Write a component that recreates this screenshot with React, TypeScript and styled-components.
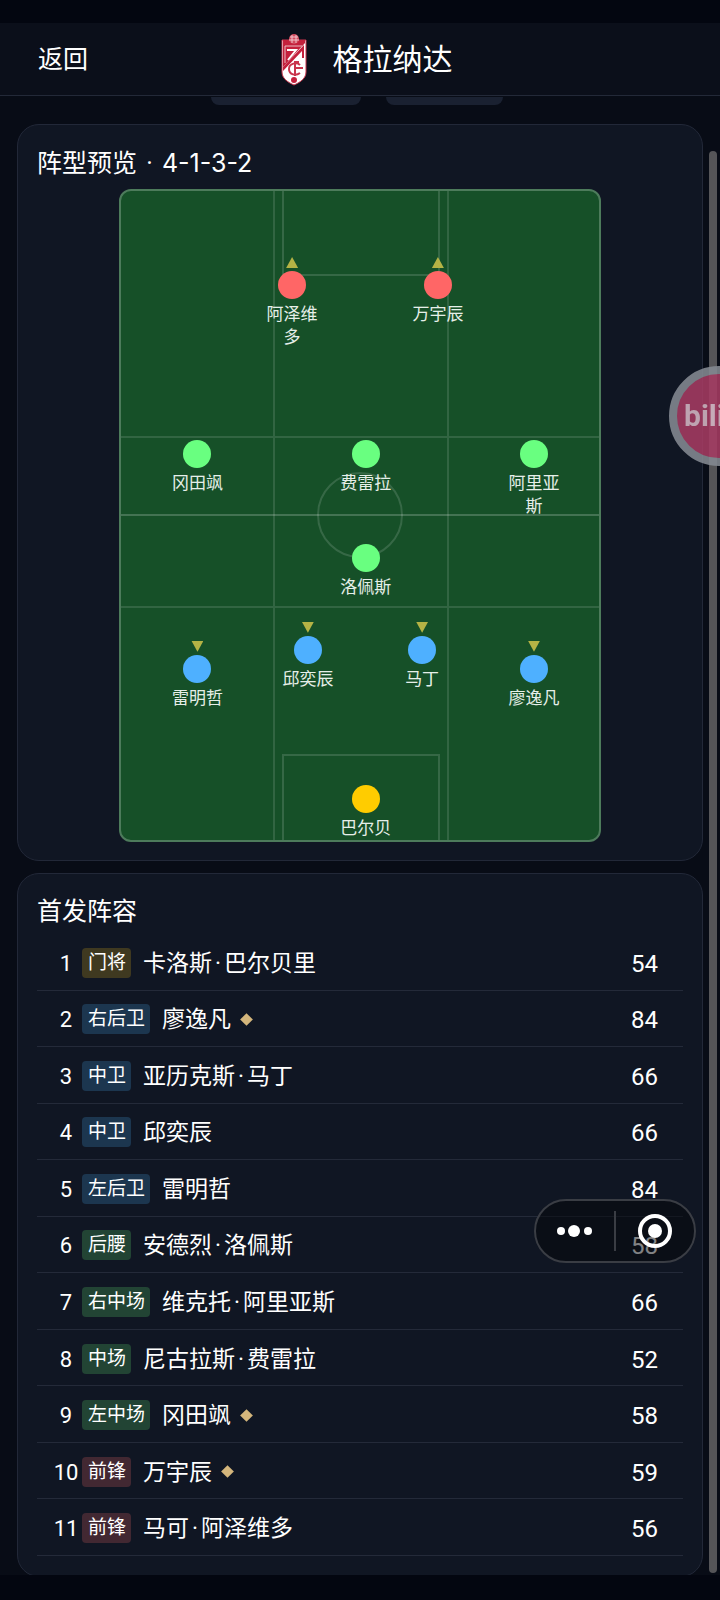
import React, { Component, Fragment } from 'react';
import styled, { createGlobalStyle } from 'styled-components';

type Line = 'gk' | 'def' | 'mid' | 'fwd';

type MarkerType = {
  name: string,
  line: Line,
  x: number,
  y: number,
  duty?: 'attack' | 'defend'
};

type StarterType = {
  position: string,
  line: Line,
  name: string,
  rating: number,
  special?: boolean
};

const dotColors: Record<Line, string> = {
  gk: '#ffcc00',
  def: '#4eb0ff',
  mid: '#69ff80',
  fwd: '#ff6666'
};

const tagColors: Record<Line, string> = {
  gk: '#3f3920',
  def: '#1c364f',
  mid: '#224434',
  fwd: '#422832'
};

// x and y are percentages of the pitch, measured to the centre of the dot
const markers: MarkerType[] = [
  { name: '阿泽维多', line: 'fwd', x: 35.8, y: 14.5, duty: 'attack' },
  { name: '万宇辰', line: 'fwd', x: 66.3, y: 14.5, duty: 'attack' },
  { name: '冈田飒', line: 'mid', x: 16, y: 40.5 },
  { name: '费雷拉', line: 'mid', x: 51.2, y: 40.5 },
  { name: '阿里亚斯', line: 'mid', x: 86.4, y: 40.5 },
  { name: '洛佩斯', line: 'mid', x: 51.2, y: 56.5 },
  { name: '邱奕辰', line: 'def', x: 39.1, y: 70.7, duty: 'defend' },
  { name: '马丁', line: 'def', x: 63, y: 70.7, duty: 'defend' },
  { name: '雷明哲', line: 'def', x: 16, y: 73.6, duty: 'defend' },
  { name: '廖逸凡', line: 'def', x: 86.4, y: 73.6, duty: 'defend' },
  { name: '巴尔贝', line: 'gk', x: 51.2, y: 93.7 }
];

const starters: StarterType[] = [
  { position: '门将', line: 'gk', name: '卡洛斯·巴尔贝里', rating: 54 },
  { position: '右后卫', line: 'def', name: '廖逸凡', rating: 84, special: true },
  { position: '中卫', line: 'def', name: '亚历克斯·马丁', rating: 66 },
  { position: '中卫', line: 'def', name: '邱奕辰', rating: 66 },
  { position: '左后卫', line: 'def', name: '雷明哲', rating: 84 },
  { position: '后腰', line: 'mid', name: '安德烈·洛佩斯', rating: 58 },
  { position: '右中场', line: 'mid', name: '维克托·阿里亚斯', rating: 66 },
  { position: '中场', line: 'mid', name: '尼古拉斯·费雷拉', rating: 52 },
  { position: '左中场', line: 'mid', name: '冈田飒', rating: 58, special: true },
  { position: '前锋', line: 'fwd', name: '万宇辰', rating: 59, special: true },
  { position: '前锋', line: 'fwd', name: '马可·阿泽维多', rating: 56 }
];

const Crest = () => (
  <svg width="52" height="52" viewBox="0 0 52 52" aria-hidden="true">
    <path d="M14 6H38V38C38 44 33 48 26 51C19 48 14 44 14 38Z" fill="#fff" stroke="#c9354c" strokeWidth="1" />
    <path d="M15 6H37V9L15 33Z" fill="#c4203c" />
    <path d="M17 12H34" stroke="#e9b9c1" strokeWidth="1" />
    <path d="M17 12V29" stroke="#e9b9c1" strokeWidth="1" />
    <path d="M19 16H28L20 26" fill="none" stroke="#fff" strokeWidth="2" />
    <path d="M36 13V24H34V17L15 37V33L36 11Z" fill="#c4203c" />
    <path d="M32 31C29 28 21 29 21 35C21 41 28 42 32 39" fill="none" stroke="#c9354c" strokeWidth="2" />
    <path d="M27 27V42M27 34H35M27 28H31" fill="none" stroke="#c9354c" strokeWidth="2" />
    <circle cx="26" cy="46" r="3" fill="#c4203c" />
    <circle cx="26" cy="5" r="5" fill="#d24a5e" />
    <path d="M22 3H30M21 6H31M24 1V9M28 1V9" stroke="#f0c3ca" strokeWidth="1" />
  </svg>
);

export default class App extends Component {
  renderMarkers = () => {
    return markers.map((marker: MarkerType) => {
      return (
        <Marker key={marker.name} style={{ left: `${marker.x}%`, top: `${marker.y}%` }}>
          {marker.duty ? <Duty $duty={marker.duty} /> : null}
          <Dot $line={marker.line} />
          <MarkerName>{marker.name}</MarkerName>
        </Marker>
      );
    });
  }

  renderName = (name: string) => {
    return name.split('·').map((part: string, i: number) => {
      return (
        <Fragment key={i}>
          {i > 0 ? <MiddleDot>·</MiddleDot> : null}
          {part}
        </Fragment>
      );
    });
  }

  renderStarters = () => {
    return starters.map((starter: StarterType, i: number) => {
      return (
        <Row key={i}>
          <Index>{i + 1}</Index>
          <Tag $line={starter.line}>{starter.position}</Tag>
          <Name>{this.renderName(starter.name)}</Name>
          {starter.special ? <Diamond /> : null}
          <Rating>{starter.rating}</Rating>
        </Row>
      );
    });
  }

  render() {
    return (
      <Screen>
        <GlobalStyle />
        <Header>
          <BackButton type="button">返回</BackButton>
          <Club>
            <Crest />
            <ClubName>格拉纳达</ClubName>
          </Club>
        </Header>
        <Content>
          <Chips>
            <Chip $width="150px" />
            <Chip $width="117px" />
          </Chips>
          <Card>
            <CardTitle>阵型预览 <MiddleDot>·</MiddleDot> <Formation>4-1-3-2</Formation></CardTitle>
            <Pitch>
              <Markings viewBox="0 0 478 649" preserveAspectRatio="none" aria-hidden="true">
                <g fill="none" stroke="#ffffff" strokeWidth="2">
                  <path d="M153 0V649M327 0V649M0 246H478M0 416H478" strokeOpacity="0.12" />
                  <path d="M0 324H478" strokeOpacity="0.2" />
                  <path d="M162 0V84H318V0M162 649V564H318V649" strokeOpacity="0.14" />
                  <circle cx="239" cy="324" r="42" strokeOpacity="0.14" />
                </g>
              </Markings>
              {this.renderMarkers()}
            </Pitch>
          </Card>
          <RosterCard>
            <CardTitle>首发阵容</CardTitle>
            <Roster>{this.renderStarters()}</Roster>
          </RosterCard>
        </Content>
        <ScrollThumb />
        <FloatingLogo>bili</FloatingLogo>
        <Capsule>
          <CapsuleButton type="button" aria-label="更多">
            <svg width="36" height="14" viewBox="0 0 36 14" fill="#fff">
              <circle cx="4" cy="7" r="4" />
              <circle cx="17" cy="7" r="6" />
              <circle cx="31" cy="7" r="4" />
            </svg>
          </CapsuleButton>
          <Divider />
          <CapsuleButton type="button" aria-label="关闭">
            <svg width="34" height="34" viewBox="0 0 34 34">
              <circle cx="17" cy="17" r="15" fill="none" stroke="#fff" strokeWidth="4" />
              <circle cx="17" cy="17" r="7" fill="#fff" />
            </svg>
          </CapsuleButton>
        </Capsule>
      </Screen>
    );
  }
}

const GlobalStyle = createGlobalStyle`
  * {
    box-sizing: border-box;
  }

  body {
    margin: 0;
    background: #030610;
    color: #ffffff;
    font-family: Roboto, "Noto Sans CJK SC", sans-serif;
  }
`;

const Screen = styled.div`
  position: relative;
  height: 100vh;
  padding: 23px 0 25px;
  display: flex;
  flex-direction: column;
  overflow: hidden;
`;

const Header = styled.header`
  flex: none;
  height: 73px;
  padding: 2px 38px 0;
  display: grid;
  grid-template-columns: 1fr auto 1fr;
  align-items: center;
  background: #0b0f1a;
  border-bottom: 1px solid #232938;
`;

const BackButton = styled.button`
  justify-self: start;
  padding: 0;
  border: 0;
  background: none;
  color: inherit;
  font: inherit;
  font-size: 25px;
  line-height: 36px;
  cursor: pointer;
`;

const Club = styled.div`
  display: flex;
  align-items: center;
  gap: 13px;
`;

const ClubName = styled.h1`
  margin: 0;
  font-size: 30px;
  line-height: 36px;
  font-weight: 400;
`;

const Content = styled.main`
  flex: 1;
  min-height: 0;
  padding: 0 17px;
  display: flex;
  flex-direction: column;
  overflow-y: auto;
  scrollbar-width: none;
  background: #080c16;
`;

const Chips = styled.div`
  flex: none;
  display: flex;
  justify-content: center;
  gap: 25px;
  padding: 1px 7px 0 0;
  margin-bottom: 19px;
`;

const Chip = styled.span<{ $width: string }>`
  width: ${props => props.$width};
  height: 8px;
  border-radius: 0 0 10px 10px;
  background: #1a2131;
`;

const Card = styled.section`
  flex: none;
  padding: 19px 19px 18px;
  margin-bottom: 12px;
  border: 1px solid #222838;
  border-radius: 22px;
  background: #101623;
`;

const RosterCard = styled(Card)`
  flex: 1;
  display: flex;
  flex-direction: column;
  padding-bottom: 20px;
  margin-bottom: -2px;
`;

const CardTitle = styled.h2`
  margin: 0 0 3px;
  font-size: 25px;
  line-height: 38px;
  font-weight: 400;
`;

const MiddleDot = styled.span`
  margin: 0 3px;
`;

const Formation = styled.span`
  font-family: Inter, sans-serif;
  font-size: 25px;
`;

const Pitch = styled.div`
  position: relative;
  width: 75%;
  max-width: 482px;
  aspect-ratio: 482 / 653;
  margin: 6px auto 0;
  border: 2px solid #4d7b5b;
  border-radius: 12px;
  background: #165028;
`;

const Markings = styled.svg`
  display: block;
  position: absolute;
  width: 100%;
  height: 100%;
`;

const Marker = styled.div`
  position: absolute;
  width: 56px;
  margin: -14px 0 0 -28px;
  display: flex;
  flex-direction: column;
  align-items: center;
`;

const Dot = styled.span`
  width: 28px;
  height: 28px;
  border-radius: 50%;
  background: ${(props: { $line: Line }) => dotColors[props.$line]};
`;

const Duty = styled.span<{ $duty: 'attack' | 'defend' }>`
  position: absolute;
  top: -14px;
  width: 12px;
  height: 11px;
  background: #b5b345;
  clip-path: ${props => props.$duty === 'attack' ? 'polygon(50% 0, 100% 100%, 0 100%)' : 'polygon(0 0, 100% 0, 50% 100%)'};
`;

const MarkerName = styled.span`
  margin-top: 4px;
  font-size: 17px;
  line-height: 23px;
  text-align: center;
  color: #e6efe9;
`;

const Roster = styled.ol`
  flex: 1;
  margin: 0;
  padding: 0;
  display: grid;
  grid-auto-rows: 1fr;
  list-style: none;
`;

const Row = styled.li`
  min-height: 54px;
  padding: 2px 25px 0 13px;
  display: flex;
  align-items: center;
  border-bottom: 1px solid #242a39;
`;

const Index = styled.span`
  width: 32px;
  padding-top: 2px;
  font-size: 22px;
  line-height: 30px;
  text-align: center;
`;

const Tag = styled.span`
  padding: 0 5px 0 6px;
  border-radius: 4px;
  font-size: 19px;
  line-height: 30px;
  background: ${(props: { $line: Line }) => tagColors[props.$line]};
`;

const Name = styled.span`
  margin-left: 12px;
  padding-top: 2px;
  font-size: 23px;
  line-height: 30px;
`;

const Diamond = styled.span`
  width: 9px;
  height: 9px;
  margin-left: 11px;
  transform: rotate(45deg);
  background: #d4b67c;
`;

const Rating = styled.span`
  margin-left: auto;
  padding-top: 2px;
  font-size: 24px;
  line-height: 30px;
`;

const ScrollThumb = styled.div`
  position: absolute;
  top: 151px;
  right: 3px;
  bottom: 27px;
  width: 8px;
  border-radius: 4px;
  background: #555558;
`;

const FloatingLogo = styled.div`
  position: absolute;
  top: 366px;
  right: -49px;
  width: 100px;
  height: 100px;
  padding-left: 7px;
  border: 8px solid #858a92;
  border-radius: 50%;
  background: #a53c62;
  color: #d6b8c5;
  font-size: 30px;
  font-weight: 700;
  line-height: 84px;
  opacity: 0.88;
`;

const Capsule = styled.div`
  position: absolute;
  right: 24px;
  bottom: 337px;
  width: 162px;
  height: 64px;
  display: flex;
  align-items: center;
  border: 2px solid #3a3d44;
  border-radius: 32px;
  background: rgba(4, 5, 10, 0.5);
`;

const CapsuleButton = styled.button`
  flex: 1;
  height: 100%;
  padding: 0;
  display: flex;
  align-items: center;
  justify-content: center;
  border: 0;
  background: none;
  cursor: pointer;
`;

const Divider = styled.span`
  width: 2px;
  height: 40px;
  background: #3a3d44;
`;
